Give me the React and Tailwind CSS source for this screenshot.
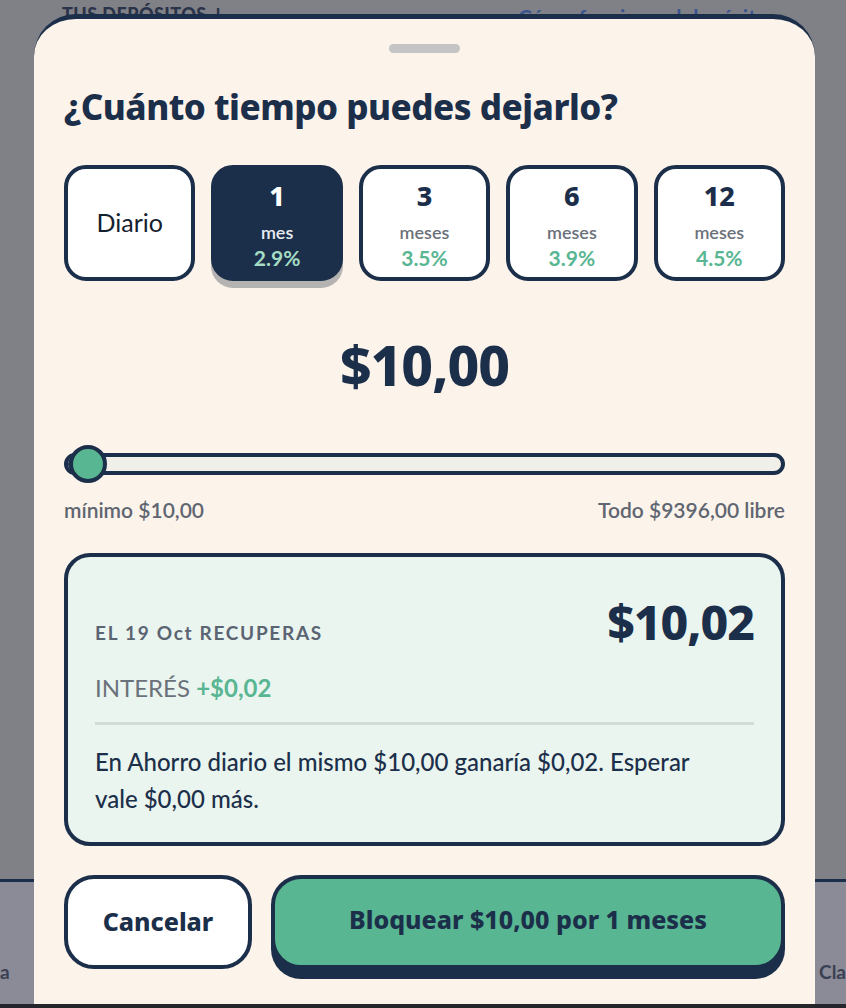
import React, { useState } from 'react';

const navy = 'text-[#1c2f4a]';

const plans = [
  { id: 'diario', label: 'Diario' },
  { id: '1', num: '1', unit: 'mes', rate: '2.9%' },
  { id: '3', num: '3', unit: 'meses', rate: '3.5%' },
  { id: '6', num: '6', unit: 'meses', rate: '3.9%' },
  { id: '12', num: '12', unit: 'meses', rate: '4.5%' },
];

const display = { fontFamily: '"Noto Sans", "Open Sans", sans-serif' };
const body = { fontFamily: 'Lato, "Noto Sans", sans-serif' };

const PlanOption = ({ plan, selected, onSelect }) => {
  if (!plan.num) {
    return (
      <button
        onClick={onSelect}
        className="flex h-[116px] items-center justify-center rounded-[22px] border-4 border-[#1c2f4a] bg-white text-[25px] text-[#15202e]"
        style={body}
      >
        {plan.label}
      </button>
    );
  }
  return (
    <button
      onClick={onSelect}
      className={`flex h-[116px] flex-col items-center rounded-[22px] border-4 border-[#1c2f4a] pt-[10px] ${
        selected ? 'bg-[#1c2f4a] shadow-[0_7px_0_#b4b3b2]' : 'bg-white'
      }`}
    >
      <span
        className={`text-[27px] font-extrabold leading-[34px] ${selected ? 'text-white' : 'text-[#1c2f4a]'}`}
        style={display}
      >
        {plan.num}
      </span>
      <span
        className={`mt-[7px] text-[18px] font-semibold leading-[24px] ${selected ? 'text-[#e9edf2]' : 'text-[#6b717b]'}`}
        style={body}
      >
        {plan.unit}
      </span>
      <span
        className={`text-[21px] font-bold leading-[28px] ${selected ? 'text-[#a5dcc4]' : 'text-[#58b692]'}`}
        style={body}
      >
        {plan.rate}
      </span>
    </button>
  );
};

const App = () => {
  const [plan, setPlan] = useState('1');

  return (
    <div className="relative flex h-[1008px] w-[846px] flex-col overflow-hidden bg-[#808087]">
      {/* Page behind the sheet */}
      <div className="flex items-start px-[62px] pt-[1px]" style={body}>
        <span className="text-[18px] font-black tracking-wide text-[#2a3349]">TUS DEPÓSITOS ↓</span>
        <span className="ml-auto mr-[16px] text-[21px] font-bold text-[#3a5590]">Cómo funciona el depósito</span>
      </div>
      <div className="flex-1" />
      <div className="flex h-[125px] items-end justify-between border-t-[3px] border-[#1c2f4a] bg-[#8a8b97] pb-[18px]" style={body}>
        <span className="text-[19px] font-bold text-[#3b3f52]">a</span>
        <span className="text-[19px] font-bold text-[#3b3f52]">Cla</span>
      </div>
      <div className="h-[4px] bg-[#25252c]" />

      {/* Bottom sheet */}
      <div className="absolute bottom-[4px] left-[34px] top-[14px] flex w-[781px] flex-col rounded-t-[42px] border-t-[5px] border-[#1c2f4a] bg-[#fcf3ea] px-[30px]">
        <div className="mx-auto mt-[25px] h-[9px] w-[71px] rounded-full bg-[#c4c4c4]" />

        <h1 className={`mt-[32px] text-[35px] font-extrabold leading-[44px] tracking-[-0.5px] ${navy}`} style={display}>
          ¿Cuánto tiempo puedes dejarlo?
        </h1>

        <div className="mt-[36px] grid grid-cols-5 gap-[16px]">
          {plans.map((p) => (
            <PlanOption key={p.id} plan={p} selected={plan === p.id} onSelect={() => setPlan(p.id)} />
          ))}
        </div>

        <div className={`mt-[52px] text-center text-[55px] font-extrabold leading-[64px] tracking-[-1px] ${navy}`} style={display}>
          $10,00
        </div>

        {/* Slider */}
        <div className="relative mt-[56px] h-[22px] rounded-full border-4 border-[#1c2f4a] bg-[#f0efea]">
          <div className="absolute bottom-0 left-0 top-0 w-[24px] rounded-full bg-[#1c2f4a]" />
          <div className="absolute left-[1px] top-1/2 h-[38px] w-[38px] -translate-y-1/2 rounded-full border-4 border-[#1c2f4a] bg-[#58b692]" />
        </div>
        <div className="mt-[22px] flex justify-between text-[21px] font-semibold leading-[25px] text-[#5f6671]" style={body}>
          <span>mínimo $10,00</span>
          <span>Todo $9396,00 libre</span>
        </div>

        {/* Summary card */}
        <div className="mt-[31px] rounded-[26px] border-4 border-[#1c2f4a] bg-[#eaf5ef] px-[27px] pb-[25px] pt-[38px]">
          <div className="flex h-[54px] items-center justify-between">
            <span className="mt-[22px] text-[19px] font-bold tracking-[1.7px] text-[#5b6472]" style={body}>
              EL 19 Oct RECUPERAS
            </span>
            <span className={`text-[48px] font-extrabold leading-[54px] tracking-[-1px] ${navy}`} style={display}>
              $10,02
            </span>
          </div>
          <div className="mt-[24px] text-[24px] leading-[30px] text-[#6b717b]" style={body}>
            INTERÉS <span className="font-bold text-[#58b692]">+$0,02</span>
          </div>
          <div className="mt-[19px] h-[3px] bg-[#d3ddd8]" />
          <p className={`mt-[18px] max-w-[630px] text-[24px] font-medium leading-[37px] ${navy}`} style={body}>
            En Ahorro diario el mismo $10,00 ganaría $0,02. Esperar vale $0,00 más.
          </p>
        </div>

        {/* Actions */}
        <div className="mt-[29px] flex gap-[19px]">
          <button
            className={`h-[94px] w-[188px] rounded-[30px] border-4 border-[#1c2f4a] bg-white text-[25px] font-extrabold ${navy}`}
            style={display}
          >
            Cancelar
          </button>
          <button
            className={`h-[94px] flex-1 rounded-[30px] border-4 border-[#1c2f4a] bg-[#58b692] pb-[4px] text-[25px] font-extrabold shadow-[0_10px_0_#1c2f4a] ${navy}`}
            style={display}
          >
            Bloquear $10,00 por 1 meses
          </button>
        </div>
      </div>
    </div>
  );
};

export default App;
